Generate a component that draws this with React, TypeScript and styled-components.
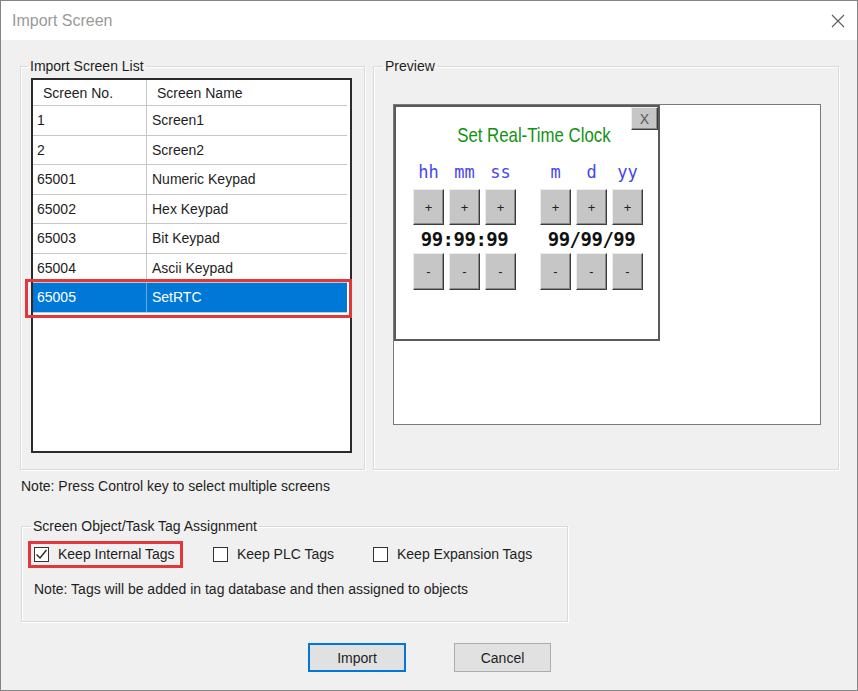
import React from "react"
import styled, { createGlobalStyle } from "styled-components"

const GlobalStyle = createGlobalStyle`
    body {
        margin: 0;
        font-family: "Liberation Sans", Arial, sans-serif;
        color: #1e1e1e;
    }
`

const Window = styled.div`
    width: 858px;
    height: 691px;
    box-sizing: border-box;
    border: 1px solid #858585;
    background: #f0f0f0;
    display: flex;
    flex-direction: column;
`

const TitleBar = styled.div`
    height: 39px;
    flex-shrink: 0;
    background: #fff;
    display: flex;
    align-items: center;
    justify-content: space-between;
    padding: 0 12px 0 11px;
    font-size: 16px;
    color: #9a9a9a;
`

const CloseIcon = () => (
    <svg width="14" height="14" viewBox="0 0 14 14">
        <path d="M1 1 L13 13 M13 1 L1 13" stroke="#5c5c5c" strokeWidth="1.1" />
    </svg>
)

const Body = styled.div`
    padding: 18px 18px 0 19px;
    font-size: 14px;
`

const TopRow = styled.div`
    display: flex;
    gap: 8px;
`

const Group = styled.fieldset<{ $width: number }>`
    box-sizing: border-box;
    width: ${(p) => p.$width}px;
    min-width: 0;
    margin: 0;
    border: 1px solid #d9d9d9;
    box-shadow: inset 1px 1px 0 #fff, 1px 1px 0 #fff;
`

const Legend = styled.legend<{ $offset: number }>`
    padding: 0 2px;
    margin-left: ${(p) => p.$offset}px;
    line-height: 16px;
    font-size: 14px;
    color: #1e1e1e;
`

const ListGroup = styled(Group)`
    padding: 4px 12px 16px 10px;
`

const PreviewGroup = styled(Group)`
    padding: 30px 17px 44px 19px;
`

const ListBox = styled.div`
    width: 321px;
    height: 375px;
    box-sizing: border-box;
    border: 2px solid #2b2b2b;
    background: #fff;
`

const Row = styled.div<{ $selected?: boolean; $header?: boolean }>`
    position: relative;
    display: grid;
    grid-template-columns: 114px 200px;
    width: 314px;
    height: ${(p) => (p.$header ? 26 : 29.5)}px;
    box-sizing: border-box;
    border-bottom: 1px solid #c6c6c6;
    background: ${(p) => (p.$selected ? "#0078d7" : "#fff")};
    color: ${(p) => (p.$selected ? "#fff" : "#1e1e1e")};

    ${(p) =>
        p.$selected &&
        `
        &::after {
            content: "";
            position: absolute;
            inset: -4px -5px -6px -8px;
            border: 3px solid #e2383c;
            pointer-events: none;
        }
    `}
`

const Cell = styled.div<{ $first?: boolean; $header?: boolean; $selected?: boolean }>`
    display: flex;
    align-items: center;
    box-sizing: border-box;
    padding-left: ${(p) => (p.$header ? 10 : p.$first ? 4 : 5)}px;
    border-right: ${(p) =>
        p.$first ? `1px solid ${p.$selected ? "#6aa6dc" : "#c6c6c6"}` : "none"};
    white-space: nowrap;
`

const PreviewBox = styled.div`
    width: 428px;
    height: 321px;
    box-sizing: border-box;
    border: 1px solid #7a7a7a;
    background: #fff;
`

const HmiScreen = styled.div`
    position: relative;
    width: 266px;
    height: 236px;
    box-sizing: border-box;
    border: 2px solid #5a5a5a;
    background: #fff;
`

const bevel = `
    box-sizing: border-box;
    background: #c6c6c6;
    border: 1px solid;
    border-color: #ededed #3c3c3c #3c3c3c #ededed;
    box-shadow: inset -1px -1px 0 #8a8a8a;
    display: flex;
    align-items: center;
    justify-content: center;
`

const CloseKey = styled.div`
    ${bevel}
    position: absolute;
    top: 0;
    right: 0;
    width: 27px;
    height: 23px;
    font-size: 14px;
    color: #5a5a5a;
`

const HmiTitle = styled.div`
    padding: 16px 0 0 14px;
    height: 24px;
    line-height: 24px;
    text-align: center;
`

const HmiTitleText = styled.span`
    display: inline-block;
    font-size: 21px;
    color: #129212;
    transform: scaleX(0.8);
`

const KeyGrid = styled.div`
    margin-top: 14px;
    padding-left: 17px;
    display: grid;
    grid-template-columns: 31px 31px 31px 14px 31px 31px 31px;
    grid-template-rows: auto 36px 28px 37px;
    column-gap: 5px;
`

const FieldLabel = styled.div<{ $col: number }>`
    grid-column: ${(p) => p.$col};
    grid-row: 1;
    margin-bottom: 6px;
    line-height: 22px;
    text-align: center;
    font-family: "DejaVu Sans Mono", monospace;
    font-size: 17px;
    color: #4646ee;
`

const Key = styled.div<{ $col: number; $row: number }>`
    ${bevel}
    grid-column: ${(p) => p.$col};
    grid-row: ${(p) => p.$row};
    font-size: 13px;
    color: #222;
`

const Value = styled.div<{ $col: number }>`
    grid-column: ${(p) => p.$col} / span 3;
    grid-row: 3;
    line-height: 28px;
    text-align: center;
    font-family: "DejaVu Sans Mono", monospace;
    font-weight: bold;
    font-size: 19px;
    letter-spacing: -0.5px;
    color: #111;
`

const Note = styled.div`
    margin: 8px 0 0 1px;
    line-height: 16px;
`

const TagGroup = styled(Group)`
    margin: 24px 0 0 1px;
    padding: 10px 12px 24px 12px;
`

const CheckRow = styled.div`
    display: grid;
    grid-template-columns: 179px 160px auto;
    height: 20px;
    align-items: center;
`

const CheckItem = styled.label<{ $highlight?: boolean }>`
    position: relative;
    display: inline-flex;
    align-items: center;
    gap: 9px;
    justify-self: start;
    line-height: 20px;

    ${(p) =>
        p.$highlight &&
        `
        &::after {
            content: "";
            position: absolute;
            inset: -3px -8px -4px -6px;
            border: 3px solid #e2383c;
        }
    `}
`

const Box = styled.span`
    width: 15px;
    height: 15px;
    box-sizing: border-box;
    border: 1px solid #333;
    background: #fff;
    display: flex;
    align-items: center;
    justify-content: center;
`

const TagNote = styled.div`
    margin-top: 17px;
    line-height: 16px;
`

const ButtonRow = styled.div`
    display: flex;
    justify-content: center;
    gap: 48px;
    margin-top: 21px;
`

const Button = styled.button<{ $default?: boolean }>`
    width: ${(p) => (p.$default ? 98 : 97)}px;
    height: 29px;
    box-sizing: border-box;
    background: #e1e1e1;
    border: ${(p) => (p.$default ? "2px solid #0078d7" : "1px solid #adadad")};
    font-family: "Liberation Sans", Arial, sans-serif;
    font-size: 14px;
    color: #1e1e1e;
    padding: 0;
`

const screens = [
    ["1", "Screen1"],
    ["2", "Screen2"],
    ["65001", "Numeric Keypad"],
    ["65002", "Hex Keypad"],
    ["65003", "Bit Keypad"],
    ["65004", "Ascii Keypad"],
    ["65005", "SetRTC"],
]

const fields = ["hh", "mm", "ss", "", "m", "d", "yy"]

const Check = ({ checked }: { checked?: boolean }) => (
    <Box>
        {checked && (
            <svg width="13" height="13" viewBox="0 0 13 13">
                <path d="M1.5 6.5 L5 10 L11.5 2" fill="none" stroke="#222" strokeWidth="1.3" />
            </svg>
        )}
    </Box>
)

function App() {
    const keyCols = [1, 2, 3, 5, 6, 7]

    return (
        <>
            <GlobalStyle />
            <Window>
                <TitleBar>
                    <span>Import Screen</span>
                    <CloseIcon />
                </TitleBar>
                <Body>
                    <TopRow>
                        <ListGroup $width={345}>
                            <Legend $offset={-3}>Import Screen List</Legend>
                            <ListBox>
                                <Row $header>
                                    <Cell $first $header>
                                        Screen No.
                                    </Cell>
                                    <Cell $header>Screen Name</Cell>
                                </Row>
                                {screens.map(([no, name]) => {
                                    const selected = no === "65005"
                                    return (
                                        <Row key={no} $selected={selected}>
                                            <Cell $first $selected={selected}>
                                                {no}
                                            </Cell>
                                            <Cell>{name}</Cell>
                                        </Row>
                                    )
                                })}
                            </ListBox>
                        </ListGroup>
                        <PreviewGroup $width={466}>
                            <Legend $offset={-10}>Preview</Legend>
                            <PreviewBox>
                                <HmiScreen>
                                    <CloseKey>X</CloseKey>
                                    <HmiTitle>
                                        <HmiTitleText>Set Real-Time Clock</HmiTitleText>
                                    </HmiTitle>
                                    <KeyGrid>
                                        {fields.map((f, i) =>
                                            f ? (
                                                <FieldLabel key={f} $col={i + 1}>
                                                    {f}
                                                </FieldLabel>
                                            ) : null
                                        )}
                                        {keyCols.map((c) => (
                                            <Key key={"p" + c} $col={c} $row={2}>
                                                +
                                            </Key>
                                        ))}
                                        <Value $col={1}>99:99:99</Value>
                                        <Value $col={5}>99/99/99</Value>
                                        {keyCols.map((c) => (
                                            <Key key={"m" + c} $col={c} $row={4}>
                                                -
                                            </Key>
                                        ))}
                                    </KeyGrid>
                                </HmiScreen>
                            </PreviewBox>
                        </PreviewGroup>
                    </TopRow>
                    <Note>Note: Press Control key to select multiple screens</Note>
                    <TagGroup $width={547}>
                        <Legend $offset={-3}>Screen Object/Task Tag Assignment</Legend>
                        <CheckRow>
                            <CheckItem $highlight>
                                <Check checked />
                                Keep Internal Tags
                            </CheckItem>
                            <CheckItem>
                                <Check />
                                Keep PLC Tags
                            </CheckItem>
                            <CheckItem>
                                <Check />
                                Keep Expansion Tags
                            </CheckItem>
                        </CheckRow>
                        <TagNote>
                            Note: Tags will be added in tag database and then assigned to objects
                        </TagNote>
                    </TagGroup>
                    <ButtonRow>
                        <Button $default>Import</Button>
                        <Button>Cancel</Button>
                    </ButtonRow>
                </Body>
            </Window>
        </>
    )
}

export default App
